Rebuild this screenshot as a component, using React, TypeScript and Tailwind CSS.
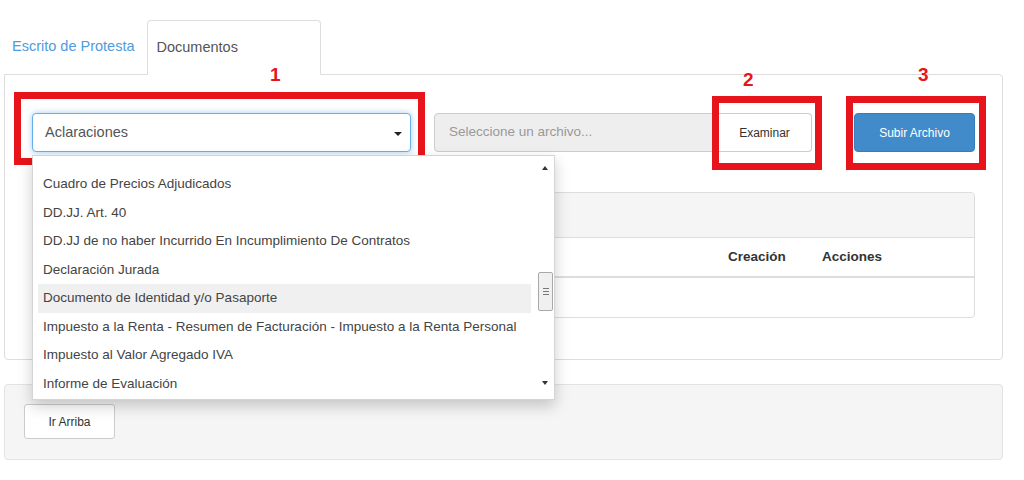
import React from "react";

const items = [
  "Cuadro de Precios Adjudicados",
  "DD.JJ. Art. 40",
  "DD.JJ de no haber Incurrido En Incumplimiento De Contratos",
  "Declaración Jurada",
  "Documento de Identidad y/o Pasaporte",
  "Impuesto a la Renta - Resumen de Facturación - Impuesto a la Renta Personal",
  "Impuesto al Valor Agregado IVA",
  "Informe de Evaluación",
];

export default function App() {
  return (
    <div className="relative w-[1024px] h-[480px] overflow-hidden bg-white text-[#333] font-['Liberation_Sans',Arial,sans-serif]">
      <div className="pt-[20px]">
        {/* Tabs */}
        <div className="flex items-end pl-[4px]">
          <div className="h-[54px] flex items-center px-[8px] text-[14.5px] text-[#4f9bdc]">Escrito de Protesta</div>
          <div className="relative z-10 -mb-px ml-[4px] h-[55px] w-[174px] border border-[#ddd] border-b-white rounded-t-[4px] bg-white flex items-center pl-[9px] text-[14.5px] text-[#555]">
            Documentos
          </div>
        </div>

        {/* Main panel */}
        <div className="ml-[4px] w-[999px] border border-[#ddd] rounded-b-[4px] rounded-tr-[4px] px-[27px] pt-[38px] pb-[41px]">
          <div className="flex items-center h-[39px]">
            {/* Select */}
            <div className="relative w-[379px] h-full z-20">
              <div className="h-full border border-[#66afe9] rounded-[4px] shadow-[0_0_6px_rgba(102,175,233,0.6)] bg-white flex items-center pl-[12px] text-[14.5px] text-[#555] relative">
                Aclaraciones
                <div className="absolute right-[8px] top-[18px] w-0 h-0 border-l-[4px] border-r-[4px] border-t-[4px] border-l-transparent border-r-transparent border-t-[#222]" />
              </div>
              <div className="absolute left-[-18px] right-[-14px] top-[-21px] bottom-[-13px] border-[7px] border-[#e8141b] pointer-events-none" />
              <div className="absolute left-[238px] top-[-48px] text-[19px] font-bold text-[#e8141b] leading-none">1</div>

              {/* Dropdown */}
              <div className="absolute left-0 top-[42px] w-[523px] h-[245px] bg-white border border-[#d5d5d5] shadow-[0_6px_14px_rgba(0,0,0,0.2)] flex">
                <div className="flex-1 pt-[14px] pl-[5px] pr-[6px]">
                  {items.map((t, i) => (
                    <div
                      key={t}
                      className={
                        "h-[28.5px] flex items-center pl-[5px] text-[13.5px] text-[#444] whitespace-nowrap " +
                        (i === 4 ? "bg-[#f0f0f0]" : "")
                      }
                    >
                      {t}
                    </div>
                  ))}
                </div>
                <div className="w-[17px] relative bg-white">
                  <div className="absolute left-[5px] top-[10px] w-0 h-0 border-l-[3px] border-r-[3px] border-b-[4px] border-l-transparent border-r-transparent border-b-[#333]" />
                  <div className="absolute left-[1px] right-[1px] top-[116px] h-[39px] rounded-[2px] border border-[#a9a9a9] bg-[#f0f0f0] flex items-center justify-center">
                    <div className="flex flex-col gap-[2px]">
                      <div className="w-[6px] h-px bg-[#777]" />
                      <div className="w-[6px] h-px bg-[#777]" />
                      <div className="w-[6px] h-px bg-[#777]" />
                    </div>
                  </div>
                  <div className="absolute left-[5px] bottom-[14px] w-0 h-0 border-l-[3px] border-r-[3px] border-t-[4px] border-l-transparent border-r-transparent border-t-[#333]" />
                </div>
              </div>
            </div>

            {/* File input group */}
            <div className="ml-[23px] flex w-[378px] h-full">
              <div className="flex-1 h-full bg-[#eee] border border-[#ccc] rounded-l-[4px] flex items-center pl-[14px] text-[13.5px] text-[#999]">
                Seleccione un archivo...
              </div>
              <div className="relative w-[94px] h-full">
                <div className="h-full border border-[#ccc] border-l-0 rounded-r-[4px] bg-white flex items-center justify-center text-[12px] text-[#333]">
                  Examinar
                </div>
                <div className="absolute left-[-6px] right-[-10px] top-[-17px] bottom-[-18px] border-[7px] border-[#e8141b] pointer-events-none" />
                <div className="absolute left-[25px] top-[-43px] text-[19px] font-bold text-[#e8141b] leading-none">2</div>
              </div>
            </div>

            {/* Upload button */}
            <div className="relative ml-auto w-[121px] h-full">
              <div className="h-full rounded-[4px] bg-[#428bca] border border-[#357ebd] flex items-center justify-center text-[12px] text-white">
                Subir Archivo
              </div>
              <div className="absolute left-[-8px] right-[-11px] top-[-17px] bottom-[-18px] border-[7px] border-[#e8141b] pointer-events-none" />
              <div className="absolute left-[64px] top-[-48px] text-[19px] font-bold text-[#e8141b] leading-none">3</div>
            </div>
          </div>

          {/* Table panel */}
          <div className="mt-[40px] border border-[#ddd] rounded-[4px] overflow-hidden">
            <div className="h-[45px] bg-[#f5f5f5] border-b border-[#ddd]" />
            <div className="h-[40px] flex items-center justify-end border-b-2 border-[#ddd] text-[13.5px] font-bold text-[#333]">
              <div className="w-[94px]">Creación</div>
              <div className="w-[152px]">Acciones</div>
            </div>
            <div className="h-[39px]" />
          </div>
        </div>

        {/* Bottom panel */}
        <div className="ml-[4px] w-[999px] mt-[24px] h-[76px] bg-[#f5f5f5] border border-[#e3e3e3] rounded-[4px] px-[19px] pt-[19px]">
          <div className="w-[91px] h-[35px] bg-white border border-[#ccc] rounded-[3px] flex items-center justify-center text-[12px] text-[#333]">
            Ir Arriba
          </div>
        </div>
      </div>
    </div>
  );
}
